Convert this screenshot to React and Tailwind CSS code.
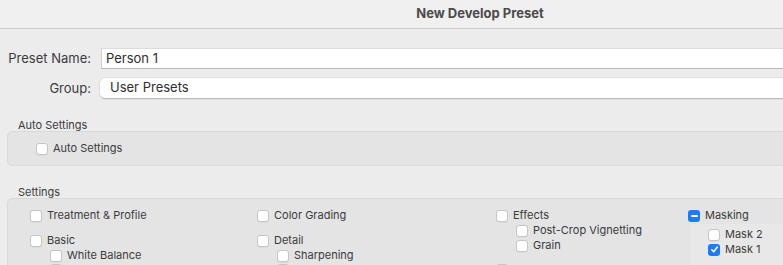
import React from 'react';

const Box = ({ state }) => {
  if (state === 'checked') {
    return (
      <span className="w-3 h-3 rounded-[3px] bg-[#1b7cf5] flex items-center justify-center shrink-0">
        <svg width="9" height="9" viewBox="0 0 10 10">
          <path d="M2 5.3 L4.1 7.6 L8.2 2.3" fill="none" stroke="white" strokeWidth="1.7" strokeLinecap="round" strokeLinejoin="round" />
        </svg>
      </span>
    );
  }
  if (state === 'mixed') {
    return (
      <span className="w-3 h-3 rounded-[3px] bg-[#1b7cf5] flex items-center justify-center shrink-0">
        <span className="w-[7px] h-[2px] bg-white rounded-full" />
      </span>
    );
  }
  return <span className="w-3 h-3 rounded-[3px] bg-white border border-[#c6c6c6] shadow-[0_0.5px_0.5px_rgba(0,0,0,0.08)] shrink-0" />;
};

const Check = ({ label, state, className = '' }) => (
  <div className={`flex items-center gap-[5px] h-[15px] ${className}`}>
    <Box state={state} />
    {label && <span className="text-[11px] leading-[15px] text-[#3b3b3b]">{label}</span>}
  </div>
);

export default function App() {
  return (
    <div className="w-[783px] h-[265px] overflow-hidden bg-[#ececec]" style={{ fontFamily: 'Inter, "Noto Sans", sans-serif' }}>
      <div className="w-[960px]">
        {/* Title bar */}
        <div className="h-[29px] bg-[#f0f0f0] border-b border-[#cbcbcb] flex items-center justify-center">
          <span className="text-[13px] font-bold text-[#4b4b4b]">New Develop Preset</span>
        </div>

        {/* Name + group */}
        <div className="pt-[19px] flex flex-col gap-[9px]">
          <div className="flex items-center">
            <label className="w-[91px] text-right text-[13px] text-[#3b3b3b]">Preset Name:</label>
            <div className="ml-[10px] flex-1 h-[21px] bg-white border-t border-[#dcdcdc] border-b border-b-[#b9b9b9] border-l border-l-[#d0d0d0] flex items-center px-[4px] text-[13px] text-[#2e2e2e]">
              Person 1
            </div>
          </div>
          <div className="flex items-center">
            <label className="w-[91px] text-right text-[13px] text-[#3b3b3b]">Group:</label>
            <div className="ml-[9px] flex-1 h-[21px] bg-white rounded-l-[5px] border-b border-[#bdbdbd] shadow-[0_0_0_0.5px_rgba(0,0,0,0.12)] flex items-center px-[10px] text-[13px] text-[#2e2e2e]">
              User Presets
            </div>
          </div>
        </div>

        {/* Auto settings */}
        <div className="mt-[19px] pl-[18px] text-[11px] leading-[15px] text-[#3b3b3b]">Auto Settings</div>
        <div className="mt-[-2px] ml-[7px] h-[35px] bg-[#e4e4e4] border border-[#d9d9d9] rounded-[5px] flex items-center pl-[28px]">
          <Check label="Auto Settings" />
        </div>

        {/* Settings */}
        <div className="mt-[19px] pl-[18px] text-[11px] leading-[15px] text-[#3b3b3b]">Settings</div>
        <div className="mt-[-2px] ml-[7px] h-[120px] bg-[#e4e4e4] border border-[#d9d9d9] rounded-[5px] pt-[9px] pl-[22px] grid grid-cols-[227px_239px_192px_1fr]">
          <div className="flex flex-col">
            <Check label="Treatment & Profile" />
            <Check label="Basic" className="mt-[10px]" />
            <div className="pl-[20px] flex flex-col">
              <Check label="White Balance" />
              <Check className="mt-[-1px]" />
            </div>
          </div>
          <div className="flex flex-col">
            <Check label="Color Grading" />
            <Check label="Detail" className="mt-[10px]" />
            <div className="pl-[20px] flex flex-col">
              <Check label="Sharpening" />
              <Check className="mt-[-1px]" />
            </div>
          </div>
          <div className="flex flex-col">
            <Check label="Effects" />
            <div className="pl-[20px] flex flex-col">
              <Check label="Post-Crop Vignetting" />
              <Check label="Grain" />
            </div>
            <Check className="mt-[9px]" />
          </div>
          <div className="flex flex-col">
            <Check label="Masking" state="mixed" />
            <div className="mt-[1px] ml-[2px] bg-[#e8e8e8] pt-[3px] pl-[18px] h-[60px] flex flex-col">
              <Check label="Mask 2" />
              <Check label="Mask 1" state="checked" />
            </div>
          </div>
        </div>
      </div>
    </div>
  );
}
